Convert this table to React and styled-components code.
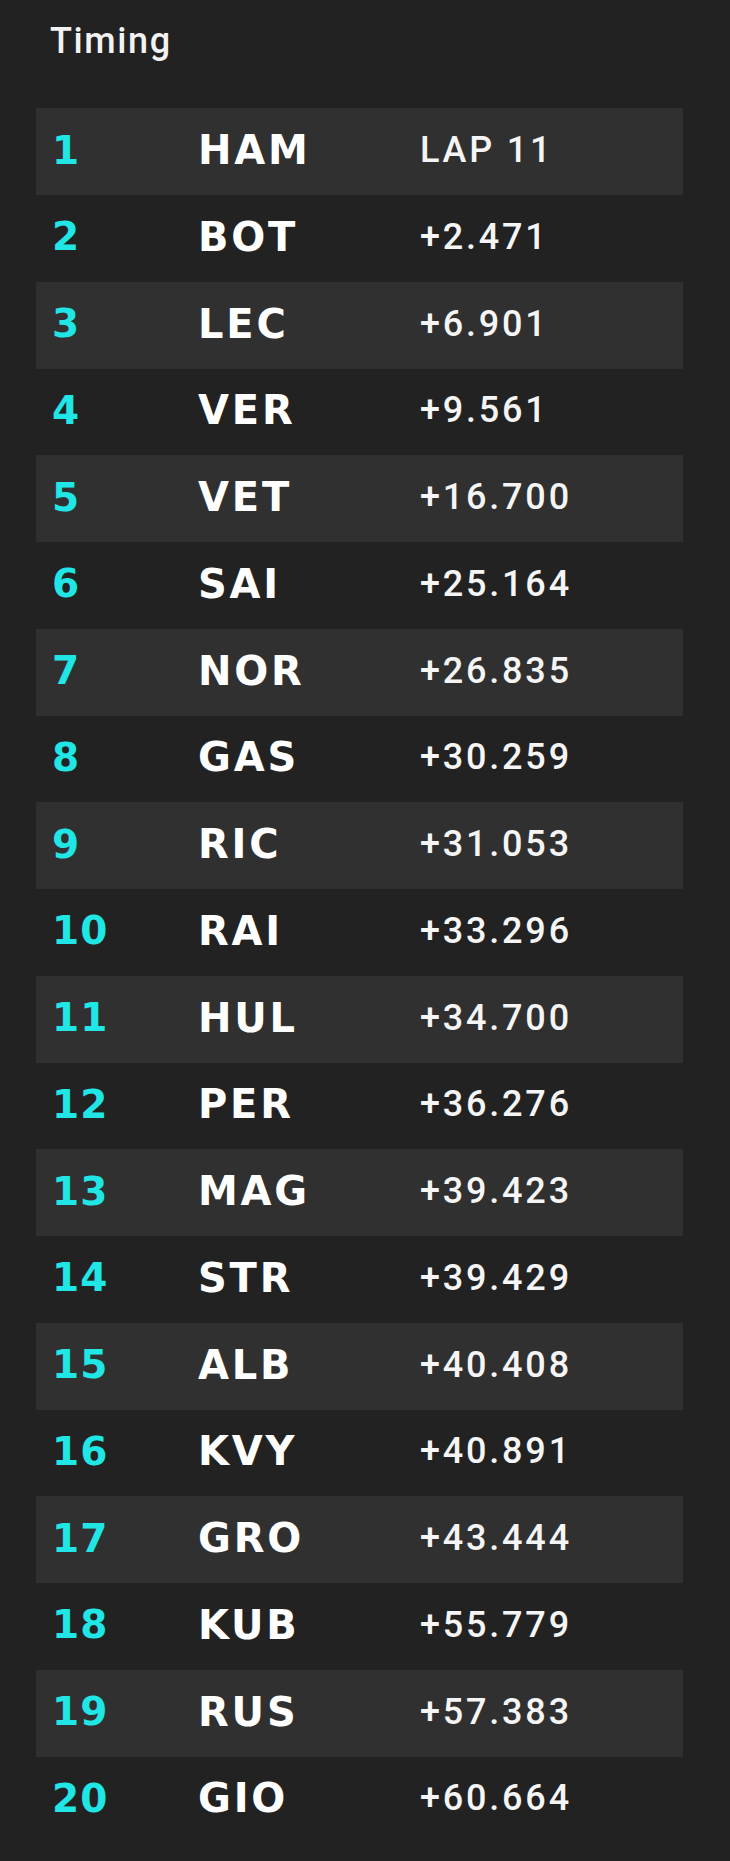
import styled, { createGlobalStyle } from 'styled-components';

const GlobalStyle = createGlobalStyle`
  html, body {
    margin: 0;
    padding: 0;
    background: #222222;
  }
`;

const Page = styled.div`
  width: 730px;
  min-height: 1861px;
  background: #222222;
  box-sizing: border-box;
`;

const Header = styled.div`
  height: 108.3px;
  box-sizing: border-box;
  padding: 23px 0 0 50px;
`;

const Title = styled.span`
  font-family: 'Roboto', 'Liberation Sans', sans-serif;
  font-weight: 500;
  font-size: 36px;
  line-height: 1;
  letter-spacing: 1.6px;
  color: #f2f2f2;
`;

const Table = styled.div`
  display: flex;
  flex-direction: column;
  margin: 0 47px 0 36px;
`;

const Row = styled.div`
  display: grid;
  grid-template-columns: 146px 222px 1fr;
  align-items: center;
  height: 86.75px;
  box-sizing: border-box;
  padding: 0 0 3px 16px;
  background: ${(p) => (p.$shaded ? '#303030' : 'transparent')};
`;

const Position = styled.span`
  font-family: 'DejaVu Sans', 'Liberation Sans', sans-serif;
  font-weight: 700;
  font-size: 39px;
  line-height: 1;
  letter-spacing: 1px;
  color: #20e6e6;
`;

const Driver = styled.span`
  font-family: 'DejaVu Sans', 'Liberation Sans', sans-serif;
  font-weight: 700;
  font-size: 40px;
  line-height: 1;
  letter-spacing: 2.8px;
  color: #ffffff;
`;

const Gap = styled.span`
  font-family: 'Roboto', 'Liberation Sans', sans-serif;
  font-weight: 500;
  font-size: 36px;
  line-height: 1;
  letter-spacing: 2.8px;
  color: #f5f5f5;
`;

const results = [
  ['HAM', 'LAP 11'],
  ['BOT', '+2.471'],
  ['LEC', '+6.901'],
  ['VER', '+9.561'],
  ['VET', '+16.700'],
  ['SAI', '+25.164'],
  ['NOR', '+26.835'],
  ['GAS', '+30.259'],
  ['RIC', '+31.053'],
  ['RAI', '+33.296'],
  ['HUL', '+34.700'],
  ['PER', '+36.276'],
  ['MAG', '+39.423'],
  ['STR', '+39.429'],
  ['ALB', '+40.408'],
  ['KVY', '+40.891'],
  ['GRO', '+43.444'],
  ['KUB', '+55.779'],
  ['RUS', '+57.383'],
  ['GIO', '+60.664'],
];

export default function App() {
  return (
    <Page>
      <GlobalStyle />
      <Header>
        <Title>Timing</Title>
      </Header>
      <Table>
        {results.map(([code, gap], i) => (
          <Row key={code} $shaded={i % 2 === 0}>
            <Position>{i + 1}</Position>
            <Driver>{code}</Driver>
            <Gap>{gap}</Gap>
          </Row>
        ))}
      </Table>
    </Page>
  );
}
